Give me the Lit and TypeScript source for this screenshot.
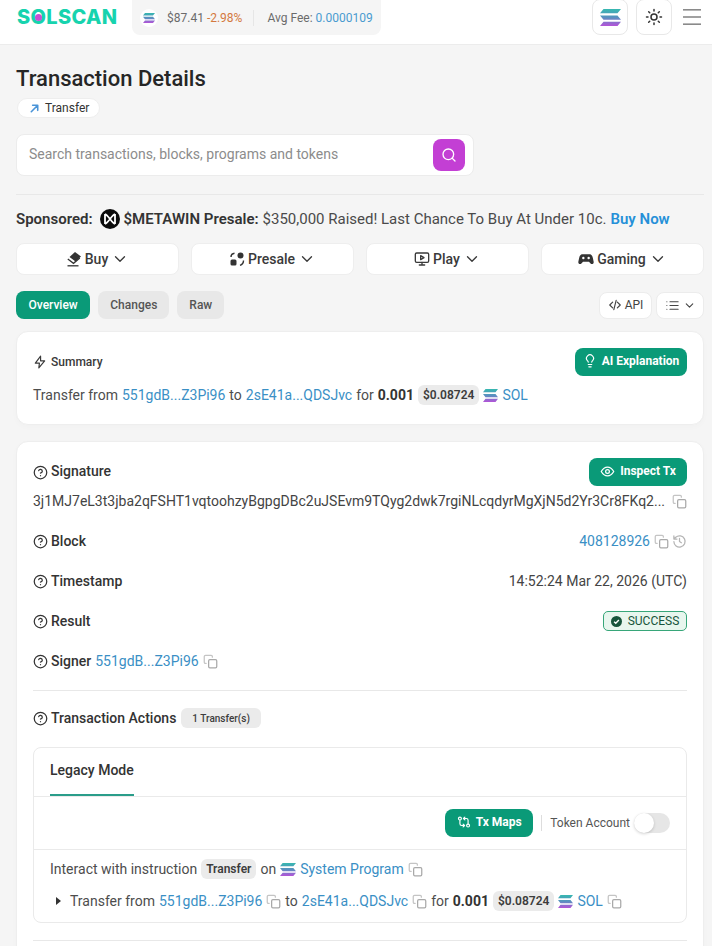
import { LitElement, html, css, svg } from 'lit';
import { customElement } from 'lit/decorators.js';

let solId = 0;
const sol = (w: number, h: number) => {
  const id = `sol${solId++}`;
  return html`<svg class="ic" width=${w} height=${h} viewBox="0 0 24 20" preserveAspectRatio="none">
    <defs><linearGradient id=${id} x1="0" y1="0" x2="0" y2="1">
      <stop offset="0" stop-color="#36b8b0"></stop>
      <stop offset="0.5" stop-color="#5a8fc0"></stop>
      <stop offset="1" stop-color="#b453d8"></stop>
    </linearGradient></defs>
    <path fill="url(#${id})" d="M4 0H24L20 5H0ZM0 7.500H20L24 12.500H4ZM4 15H24L20 20H0Z"></path>
  </svg>`;
};

const stroke = (size: number, body: unknown, color = 'currentColor', sw = 2) => html`<svg
  class="ic" width=${size} height=${size} viewBox="0 0 24 24" fill="none" stroke=${color}
  stroke-width=${sw} stroke-linecap="round" stroke-linejoin="round">${body}</svg>`;

const copy = () => stroke(15, svg`
  <rect x="9" y="9" width="13" height="13" rx="2" stroke="#a9a9a9"></rect>
  <path d="M5 15H4a2 2 0 0 1-2-2V4a2 2 0 0 1 2-2h9a2 2 0 0 1 2 2v1" stroke="#c4c4c4"></path>`);

const help = () => stroke(15, svg`
  <circle cx="12" cy="12" r="10"></circle>
  <path d="M9.100 9a3 3 0 0 1 5.800 1c0 2-3 3-3 3"></path>
  <path d="M12 17h.01"></path>`);

const chevron = (size = 18, sw = 1.8) => stroke(size, svg`<path d="m6 9 6 6 6-6"></path>`, 'currentColor', sw);

@customElement('app-root')
export class AppRoot extends LitElement {
  static styles = css`
    :host {
      display: block;
      height: 946px;
      overflow: hidden;
      background: #f5f5f5;
      font-family: Roboto, "Liberation Sans", sans-serif;
      font-size: 14px;
      color: #333;
    }
    .ic { flex: none; display: block; }
    a, .link { color: #3a8fc5; text-decoration: none; }

    header {
      height: 45px;
      box-sizing: border-box;
      background: #fff;
      border-bottom: 1px solid #ececec;
      display: flex;
      align-items: flex-start;
      padding: 0 11px 0 17px;
    }
    .logo {
      width: 100px;
      margin-top: 5px;
      font: 800 20px/25px Inter, sans-serif;
      letter-spacing: 0.3px;
      color: #17d3ae;
      white-space: nowrap;
    }
    .logo-o { position: relative; display: inline-block; }
    .logo-o::after {
      content: "";
      position: absolute;
      left: 50%;
      top: 50%;
      width: 7px;
      height: 7px;
      margin: -3.5px 0 0 -3.5px;
      border-radius: 50%;
      background: #c94fd3;
    }
    .price {
      margin-left: 15px;
      width: 249px;
      height: 35px;
      box-sizing: border-box;
      background: #f5f5f5;
      border-radius: 0 0 8px 8px;
      display: flex;
      align-items: center;
      padding-left: 8px;
      font-size: 12px;
      color: #6b6b6b;
      white-space: nowrap;
    }
    .price-ic {
      width: 18px;
      height: 18px;
      border-radius: 50%;
      background: #fff;
      display: flex;
      align-items: center;
      justify-content: center;
      margin-right: 9px;
    }
    .price .down { color: #d4793f; margin-left: 3px; }
    .price .sep { width: 1px; height: 16px; background: #e6e6e6; margin: 0 13px 0 11px; }
    .price .val { color: #4a9bd0; margin-left: 3px; }
    .head-right { margin-left: auto; display: flex; align-items: center; }
    .head-btn {
      width: 36px;
      height: 36px;
      margin-top: -1px;
      box-sizing: border-box;
      border: 1px solid #e8e8e8;
      border-radius: 8px;
      display: flex;
      align-items: center;
      justify-content: center;
      margin-right: 8px;
      background: #fff;
    }
    .burger { margin: -1px 0 0 3px; }

    main { padding: 0 8px 0 16px; }
    h1 {
      margin: 21px 0 0;
      font-size: 22px;
      line-height: 26px;
      font-weight: 500;
      color: #262626;
    }
    .type {
      margin: 6px 0 0 1px;
      width: 83px;
      height: 20px;
      box-sizing: border-box;
      background: #fff;
      border: 1px solid #eee;
      border-radius: 10px;
      display: flex;
      align-items: center;
      gap: 5px;
      padding-left: 11px;
      font-size: 12px;
      color: #333;
    }
    .search {
      margin-top: 16px;
      width: 458px;
      height: 42px;
      box-sizing: border-box;
      background: #fff;
      border: 1px solid #ececec;
      border-radius: 8px;
      display: flex;
      align-items: center;
      justify-content: space-between;
      padding: 0 8px 0 12px;
      color: #8c8c8c;
    }
    .search span:first-child { padding-bottom: 2px; }
    .search-btn {
      width: 32px;
      height: 32px;
      border-radius: 8px;
      background: #c33fd4;
      display: flex;
      align-items: center;
      justify-content: center;
    }
    .rule { height: 1px; background: #e8e8e8; }
    .rule.top { margin-top: 18px; }
    .sponsor {
      margin-top: 14px;
      height: 20px;
      display: flex;
      align-items: center;
      white-space: nowrap;
      font-size: 15px;
      color: #4a4a4a;
    }
    .sponsor b { font-weight: 600; color: #333; }
    .sponsor .mw { margin: 0 4px 0 7px; }
    .sponsor .now { color: #2590d8; font-weight: 600; margin-left: 4px; }
    .sponsor span.t { margin-left: 4px; }
    .ads {
      margin-top: 14px;
      display: grid;
      grid-template-columns: repeat(4, 1fr);
      gap: 12px;
    }
    .ad {
      height: 32px;
      box-sizing: border-box;
      background: #fff;
      border: 1px solid #eee;
      border-radius: 8px;
      display: flex;
      align-items: center;
      justify-content: center;
      gap: 3px;
      padding-bottom: 1px;
      font-weight: 500;
      color: #3a3a3a;
    }
    .tabs { margin-top: 16px; display: flex; align-items: center; gap: 8px; }
    .tab {
      height: 28px;
      border-radius: 8px;
      background: #e8e8e8;
      display: flex;
      align-items: center;
      padding: 0 12px;
      font-size: 12px;
      font-weight: 500;
      color: #555;
    }
    .tab.on { background: #0a9a78; color: #fff; padding: 0 12.5px; }
    .tools { margin-left: auto; display: flex; gap: 4px; }
    .tool {
      height: 27px;
      box-sizing: border-box;
      background: #fff;
      border: 1px solid #ececec;
      border-radius: 8px;
      display: flex;
      align-items: center;
      justify-content: center;
      gap: 3px;
      font-size: 12px;
      color: #444;
    }
    .tool.api { width: 53px; }
    .tool.list { width: 48px; }

    .card {
      background: #fff;
      border: 1px solid #eee;
      border-radius: 12px;
      box-shadow: 0 2px 6px rgba(0, 0, 0, 0.02);
      padding: 16px;
    }
    .card.sum { margin-top: 12px; height: 94px; box-sizing: border-box; }
    .card.det { margin-top: 16px; height: 560px; box-sizing: border-box; }
    .between { display: flex; align-items: center; justify-content: space-between; }
    .sum-title { display: flex; align-items: center; gap: 4px; font-size: 12px; font-weight: 500; color: #3a3a3a; }
    .green {
      height: 28px;
      box-sizing: border-box;
      border-radius: 8px;
      background: #0a9a78;
      color: #fff;
      display: flex;
      align-items: center;
      justify-content: center;
      gap: 5px;
      padding-bottom: 2px;
      font-size: 12px;
      font-weight: 700;
    }
    .flow {
      display: flex;
      align-items: center;
      height: 20px;
      gap: 4px;
      white-space: nowrap;
      color: #4d4d4d;
    }
    .flow b { font-weight: 700; color: #333; }
    .sum .flow { margin-top: 9px; }
    .chip {
      height: 20px;
      box-sizing: border-box;
      padding: 0 5px;
      border-radius: 6px;
      background: #ebebeb;
      display: inline-flex;
      align-items: center;
      font-size: 12px;
      font-weight: 600;
      color: #3d3d3d;
    }
    .chip.count { font-size: 10px; font-weight: 500; padding: 0 11px; }
    .label { display: flex; align-items: center; gap: 3px; font-weight: 500; color: #333; }
    .det > .between .label span { margin-top: -2px; }
    .hash {
      margin-top: 5px;
      height: 20px;
      display: flex;
      align-items: center;
      justify-content: space-between;
      white-space: nowrap;
      color: #444;
    }
    .row { height: 40px; display: flex; align-items: center; justify-content: space-between; color: #444; }
    .row.first { margin-top: 10px; }
    .row.left { justify-content: flex-start; gap: 4px; }
    .icons { display: flex; align-items: center; gap: 3px; }
    .icons a { margin-right: 1px; }
    .success {
      height: 20px;
      box-sizing: border-box;
      width: 84px;
      border: 1px solid #37a679;
      border-radius: 5px;
      background: #e8f6ee;
      display: flex;
      align-items: center;
      justify-content: center;
      gap: 6px;
      font-size: 12px;
      color: #17543b;
    }
    .rule.mid { margin-top: 9px; }
    .actions { margin-top: 13px; height: 28px; display: flex; align-items: center; gap: 5px; }
    .inner {
      margin-top: 15px;
      height: 176px;
      box-sizing: border-box;
      border: 1px solid #eaeaea;
      border-radius: 8px;
    }
    .inner-tabs { height: 48px; border-bottom: 1px solid #eaeaea; padding-left: 16px; }
    .inner-tab {
      display: inline-block;
      height: 48px;
      box-sizing: border-box;
      padding-top: 13px;
      line-height: 18px;
      border-bottom: 2px solid #2a9d8a;
      font-weight: 500;
      color: #333;
    }
    .inner-bar {
      height: 53px;
      box-sizing: border-box;
      border-bottom: 1px solid #eaeaea;
      display: flex;
      align-items: center;
      justify-content: flex-end;
      padding-right: 16px;
      font-size: 12px;
      color: #555;
    }
    .maps { width: 88px; }
    .vsep { width: 1px; height: 16px; background: #ddd; margin: 0 8px; }
    .toggle {
      position: relative;
      width: 36px;
      height: 20px;
      margin-left: 4px;
      border-radius: 10px;
      background: #e6e6e6;
    }
    .toggle::after {
      content: "";
      position: absolute;
      left: 0;
      top: 0;
      width: 20px;
      height: 20px;
      border-radius: 50%;
      background: #fff;
      box-shadow: 0 1px 3px rgba(0, 0, 0, 0.18);
    }
    .line { padding-left: 16px; }
    .line.a { margin-top: 9px; }
    .line.b { margin-top: 12px; }
    .caret {
      width: 0;
      height: 0;
      margin: 0 5px 0 6px;
      border-left: 5px solid #333;
      border-top: 4px solid transparent;
      border-bottom: 4px solid transparent;
    }
    .rule.end { margin-top: 17px; }
  `;

  render() {
    const link = (t: string) => html`<a href="#">${t}</a>`;
    return html`
      <header>
        <div class="logo">S<span class="logo-o">O</span>LSCAN</div>
        <div class="price">
          <span class="price-ic">${sol(12, 10)}</span>
          <span>$87.41</span><span class="down">-2.98%</span>
          <span class="sep"></span>
          <span>Avg Fee:</span><span class="val">0.0000109</span>
        </div>
        <div class="head-right">
          <div class="head-btn">${sol(21, 17)}</div>
          <div class="head-btn">${stroke(18, svg`
            <circle cx="12" cy="12" r="4"></circle>
            <path d="M12 2v2M12 20v2M4.900 4.900l1.400 1.400M17.700 17.700l1.400 1.400M2 12h2M20 12h2M6.300 17.700l-1.400 1.400M19.100 4.900l-1.400 1.400"></path>`, '#333')}</div>
          <svg class="ic burger" width="18" height="16" viewBox="0 0 18 16" fill="#8a8a8a">
            <rect y="0" width="18" height="1.600"></rect>
            <rect y="7.200" width="18" height="1.600"></rect>
            <rect y="14.400" width="18" height="1.600"></rect>
          </svg>
        </div>
      </header>
      <main>
        <h1>Transaction Details</h1>
        <div class="type">
          ${stroke(11, svg`<path d="M5 19 19 5M8 5h11v11"></path>`, '#4a94d8', 3.5)}
          <span>Transfer</span>
        </div>
        <div class="search">
          <span>Search transactions, blocks, programs and tokens</span>
          <span class="search-btn">${stroke(16, svg`<circle cx="11" cy="11" r="8"></circle><path d="m21 21-4.300-4.300"></path>`, '#fff')}</span>
        </div>
        <div class="rule top"></div>
        <div class="sponsor">
          <b>Sponsored:</b>
          <svg class="ic mw" width="20" height="20" viewBox="0 0 20 20" fill="none">
            <circle cx="10" cy="10" r="10" fill="#0c0c0c"></circle>
            <path d="M5 5c3 1 7 9 10 10M15 5c-3 1-7 9-10 10M5 5v10M15 5v10" stroke="#fff" stroke-width="1.800"></path>
          </svg>
          <b>$METAWIN Presale:</b>
          <span class="t">$350,000 Raised! Last Chance To Buy At Under 10c.</span>
          <span class="now">Buy Now</span>
        </div>
        <div class="ads">
          <div class="ad">
            <svg class="ic" width="16" height="16" viewBox="0 0 16 16">
              <path fill="#333" d="M9 1 15 5.500 9.500 10.500 3.500 6Z"></path>
              <path fill="none" stroke="#333" stroke-width="1.300" d="M1.800 8 7.500 12.300 13.800 7"></path>
              <path stroke="#333" stroke-width="1.300" d="M1.500 14.800h11"></path>
            </svg>
            <span>Buy</span>${chevron()}
          </div>
          <div class="ad">
            <svg class="ic" width="16" height="16" viewBox="0 0 16 16" fill="none">
              <circle cx="11.500" cy="4.500" r="3" fill="#333"></circle>
              <rect x="1.500" y="8.500" width="6" height="6" rx="1.500" fill="#333"></rect>
              <path stroke="#333" stroke-width="1.400" d="M2 6c0-2 1-3.500 3.500-3.800M14.500 9.500c0 2.500-1 4-3.500 4.800"></path>
            </svg>
            <span>Presale</span>${chevron()}
          </div>
          <div class="ad">
            ${stroke(16, svg`
              <rect x="2" y="3" width="20" height="14" rx="2"></rect>
              <path d="M12 17v4M8 21h8"></path>
              <path d="m10 7 5 3-5 3Z"></path>`)}
            <span>Play</span>${chevron()}
          </div>
          <div class="ad">
            <svg class="ic" width="16" height="16" viewBox="0 0 24 24">
              <path fill="#333" d="M7 5h10c3 0 4.500 2 5.200 5l1.300 6c.4 2-1 3.500-2.700 3.500-1.500 0-2.500-1-3.300-2.300L16.500 16h-9l-1 1.200C5.700 18.500 4.700 19.500 3.200 19.500 1.500 19.500.1 18 .5 16l1.300-6C2.500 7 4 5 7 5Z"></path>
              <circle cx="8" cy="10.500" r="1.800" fill="#fff"></circle>
              <circle cx="16" cy="10.500" r="1.800" fill="#fff"></circle>
            </svg>
            <span>Gaming</span>${chevron()}
          </div>
        </div>
        <div class="tabs">
          <div class="tab on">Overview</div>
          <div class="tab">Changes</div>
          <div class="tab">Raw</div>
          <div class="tools">
            <div class="tool api">${stroke(14, svg`<path d="m8 7-5 5 5 5M16 7l5 5-5 5M14 4l-4 16"></path>`)}<span>API</span></div>
            <div class="tool list">
              ${stroke(15, svg`<path d="M8 6h13M8 12h13M8 18h13M3 6h.01M3 12h.01M3 18h.01"></path>`, 'currentColor', 1.8)}
              ${chevron(13, 2)}
            </div>
          </div>
        </div>

        <section class="card sum">
          <div class="between">
            <div class="sum-title">
              ${stroke(14, svg`<path d="M13 2 4 14h7l-1 8 10-12h-7Z"></path>`)}
              <span>Summary</span>
            </div>
            <div class="green" style="width: 112px">
              ${stroke(14, svg`<path d="M9 18h6M10 22h4M15 14c.2-1 .7-1.700 1.500-2.500A6 6 0 1 0 7.500 11.500c.8.800 1.300 1.500 1.500 2.500"></path>`, '#fff')}
              <span>AI Explanation</span>
            </div>
          </div>
          <div class="flow">
            <span>Transfer from</span>${link('551gdB...Z3Pi96')}<span>to</span>${link('2sE41a...QDSJvc')}<span>for</span>
            <b>0.001</b><span class="chip">$0.08724</span>${sol(15, 13)}${link('SOL')}
          </div>
        </section>

        <section class="card det">
          <div class="between">
            <div class="label">${help()}<span>Signature</span></div>
            <div class="green" style="width: 98px">
              ${stroke(15, svg`<path d="M2 12s4-7 10-7 10 7 10 7-4 7-10 7-10-7-10-7Z"></path><circle cx="12" cy="12" r="3"></circle>`, '#fff')}
              <span>Inspect Tx</span>
            </div>
          </div>
          <div class="hash">
            <span>3j1MJ7eL3t3jba2qFSHT1vqtoohzyBgpgDBc2uJSEvm9TQyg2dwk7rgiNLcqdyrMgXjN5d2Yr3Cr8FKq2...</span>
            ${copy()}
          </div>
          <div class="row first">
            <div class="label">${help()}<span>Block</span></div>
            <div class="icons">
              ${link('408128926')}${copy()}
              ${stroke(15, svg`<path d="M3 12a9 9 0 1 0 3-6.700L3 8M3 3v5h5M12 7v5l3 2"></path>`, '#b5b5b5')}
            </div>
          </div>
          <div class="row">
            <div class="label">${help()}<span>Timestamp</span></div>
            <span>14:52:24 Mar 22, 2026 (UTC)</span>
          </div>
          <div class="row">
            <div class="label">${help()}<span>Result</span></div>
            <div class="success">
              <svg class="ic" width="11" height="11" viewBox="0 0 12 12">
                <circle cx="6" cy="6" r="6" fill="#17543b"></circle>
                <path d="m3.400 6.200 1.800 1.800 3.400-3.600" fill="none" stroke="#fff" stroke-width="1.500"></path>
              </svg>
              <span>SUCCESS</span>
            </div>
          </div>
          <div class="row left">
            <div class="label">${help()}<span>Signer</span></div>
            ${link('551gdB...Z3Pi96')}${copy()}
          </div>
          <div class="rule mid"></div>
          <div class="actions">
            <div class="label">${help()}<span>Transaction Actions</span></div>
            <span class="chip count">1 Transfer(s)</span>
          </div>
          <div class="inner">
            <div class="inner-tabs"><span class="inner-tab">Legacy Mode</span></div>
            <div class="inner-bar">
              <div class="green maps">
                ${stroke(14, svg`
                  <circle cx="5" cy="6" r="2.500"></circle><circle cx="19" cy="18" r="2.500"></circle>
                  <path d="M5 9v6a3 3 0 0 0 3 3h3M19 15V9a3 3 0 0 0-3-3h-3M13.500 3.500 11 6l2.500 2.500M10.500 15.500 13 18l-2.500 2.500"></path>`, '#fff')}
                <span>Tx Maps</span>
              </div>
              <span class="vsep"></span>
              <span>Token Account</span>
              <span class="toggle"></span>
            </div>
            <div class="flow line a">
              <span>Interact with instruction</span>
              <span class="chip">Transfer</span>
              <span>on</span>${sol(16, 13)}${link('System Program')}${copy()}
            </div>
            <div class="flow line b">
              <span class="caret"></span>
              <span>Transfer from</span>${link('551gdB...Z3Pi96')}${copy()}<span>to</span>${link('2sE41a...QDSJvc')}${copy()}<span>for</span>
              <b>0.001</b><span class="chip">$0.08724</span>${sol(15, 13)}${link('SOL')}${copy()}
            </div>
          </div>
          <div class="rule end"></div>
        </section>
      </main>
    `;
  }
}
